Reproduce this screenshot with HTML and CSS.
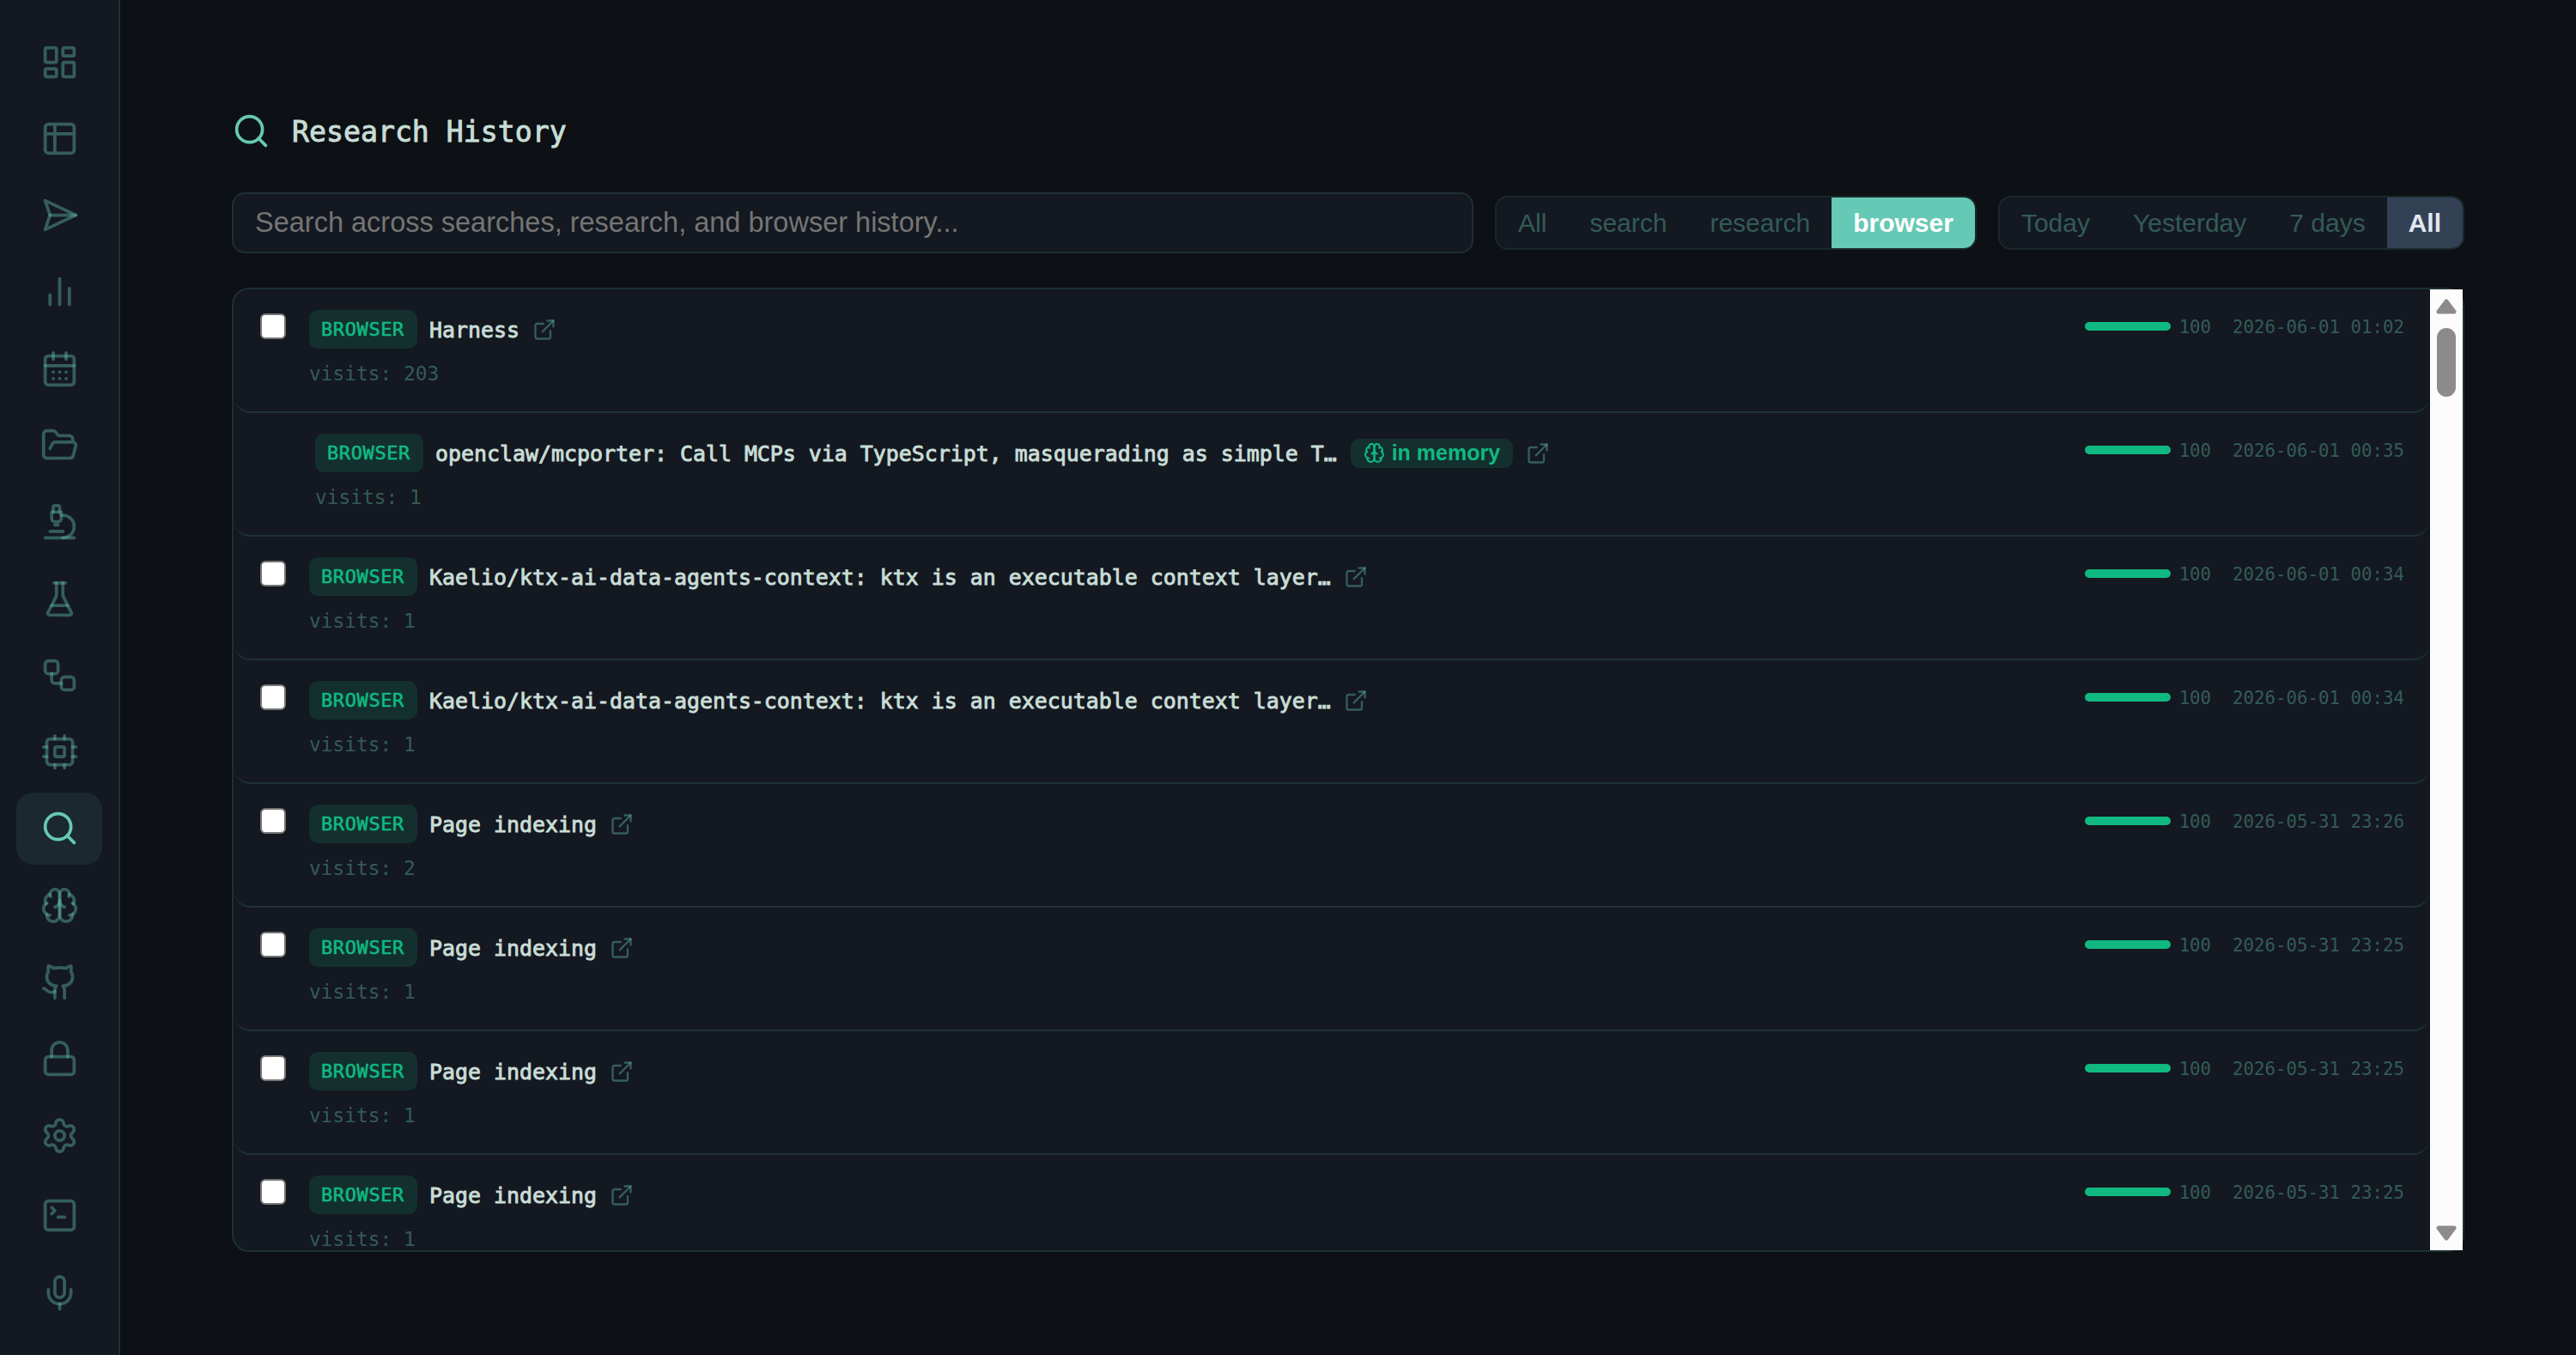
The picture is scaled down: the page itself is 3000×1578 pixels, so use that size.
FILE: index.html
```
<!DOCTYPE html>
<html lang="en">
<head>
  <meta charset="UTF-8" />
  <meta name="viewport" content="width=device-width, initial-scale=1.0" />
  <title>Research History</title>
  <link rel="stylesheet" href="styles.css">
</head>
<body>
  <svg class="sprite" xmlns="http://www.w3.org/2000/svg">
    <symbol id="i-search" viewBox="0 0 24 24"><path d="m21 21-4.34-4.34"/><circle cx="11" cy="11" r="8"/></symbol>
    <symbol id="i-link" viewBox="0 0 24 24"><path d="M15 3h6v6"/><path d="M10 14 21 3"/><path d="M18 13v6a2 2 0 0 1-2 2H5a2 2 0 0 1-2-2V8a2 2 0 0 1 2-2h6"/></symbol>
    <symbol id="i-brain" viewBox="0 0 24 24">
      <path d="M12 5a3 3 0 1 0-5.997.125 4 4 0 0 0-2.526 5.77 4 4 0 0 0 .556 6.588A4 4 0 1 0 12 18Z"/>
      <path d="M12 5a3 3 0 1 1 5.997.125 4 4 0 0 1 2.526 5.77 4 4 0 0 1-.556 6.588A4 4 0 1 1 12 18Z"/>
      <path d="M15 13a4.5 4.5 0 0 1-3-4 4.5 4.5 0 0 1-3 4"/>
      <path d="M17.599 6.5a3 3 0 0 0 .399-1.375"/>
      <path d="M6.003 5.125A3 3 0 0 0 6.401 6.5"/>
      <path d="M3.477 10.896a4 4 0 0 1 .585-.396"/>
      <path d="M19.938 10.5a4 4 0 0 1 .585.396"/>
      <path d="M6 18a4 4 0 0 1-1.967-.516"/>
      <path d="M19.967 17.484A4 4 0 0 1 18 18"/>
    </symbol>
  </svg>

  <div class="app">
    <aside class="sidebar">
      <nav class="nav">
        <a class="nav-item"><svg class="icon" viewBox="0 0 24 24"><rect x="3" y="3" width="7" height="9" rx="1"/><rect x="14" y="3" width="7" height="5" rx="1"/><rect x="14" y="12" width="7" height="9" rx="1"/><rect x="3" y="16" width="7" height="5" rx="1"/></svg></a>
        <a class="nav-item"><svg class="icon" viewBox="0 0 24 24"><path d="M5 3h14a2 2 0 0 1 2 2v14a2 2 0 0 1-2 2H5a2 2 0 0 1-2-2V5a2 2 0 0 1 2-2zM3 9h18M9 3v18"/></svg></a>
        <a class="nav-item"><svg class="icon" viewBox="0 0 24 24"><path d="m3 3 3 9-3 9 19-9Z"/><path d="M6 12h16"/></svg></a>
        <a class="nav-item"><svg class="icon" viewBox="0 0 24 24"><path d="M18 20V10"/><path d="M12 20V4"/><path d="M6 20v-6"/></svg></a>
        <a class="nav-item"><svg class="icon" viewBox="0 0 24 24"><path d="M8 2v4"/><path d="M16 2v4"/><rect x="3" y="4" width="18" height="18" rx="2"/><path d="M3 10h18"/><path d="M8 14h.01"/><path d="M12 14h.01"/><path d="M16 14h.01"/><path d="M8 18h.01"/><path d="M12 18h.01"/><path d="M16 18h.01"/></svg></a>
        <a class="nav-item"><svg class="icon" viewBox="0 0 24 24"><path d="m6 14 1.5-2.9A2 2 0 0 1 9.24 10H20a2 2 0 0 1 1.94 2.5l-1.54 6a2 2 0 0 1-1.95 1.5H4a2 2 0 0 1-2-2V5a2 2 0 0 1 2-2h3.9a2 2 0 0 1 1.69.9l.81 1.2a2 2 0 0 0 1.67.9H18a2 2 0 0 1 2 2v2"/></svg></a>
        <a class="nav-item"><svg class="icon" viewBox="0 0 24 24"><path d="M6 18h8"/><path d="M3 22h18"/><path d="M14 22a7 7 0 1 0 0-14h-1"/><path d="M9 14h2"/><path d="M9 12a2 2 0 0 1-2-2V6h6v4a2 2 0 0 1-2 2Z"/><path d="M12 6V3a1 1 0 0 0-1-1H9a1 1 0 0 0-1 1v3"/></svg></a>
        <a class="nav-item"><svg class="icon" viewBox="0 0 24 24"><path d="M10 2v7.527a2 2 0 0 1-.211.896L4.72 20.55a1 1 0 0 0 .9 1.45h12.76a1 1 0 0 0 .9-1.45l-5.069-10.127A2 2 0 0 1 14 9.527V2"/><path d="M8.5 2h7"/><path d="M7 16h10"/></svg></a>
        <a class="nav-item"><svg class="icon" viewBox="0 0 24 24"><rect x="3" y="3" width="8" height="8" rx="2"/><path d="M7 11v4a2 2 0 0 0 2 2h4"/><rect x="13" y="13" width="8" height="8" rx="2"/></svg></a>
        <a class="nav-item"><svg class="icon" viewBox="0 0 24 24"><rect x="4" y="4" width="16" height="16" rx="2"/><rect x="9" y="9" width="6" height="6" rx="1"/><path d="M15 2v2"/><path d="M15 20v2"/><path d="M2 15h2"/><path d="M2 9h2"/><path d="M20 15h2"/><path d="M20 9h2"/><path d="M9 2v2"/><path d="M9 20v2"/></svg></a>
        <a class="nav-item active"><svg class="icon"><use href="#i-search"/></svg></a>
        <a class="nav-item"><svg class="icon"><use href="#i-brain"/></svg></a>
        <a class="nav-item"><svg class="icon" viewBox="0 0 24 24"><path d="M15 22v-4a4.8 4.8 0 0 0-1-3.5c3 0 6-2 6-5.5.08-1.25-.27-2.48-1-3.5.28-1.15.28-2.35 0-3.5 0 0-1 0-3 1.5-2.64-.5-5.36-.5-8 0C6 2 5 2 5 2c-.3 1.15-.3 2.35 0 3.5A5.403 5.403 0 0 0 4 9c0 3.5 3 5.5 6 5.5-.39.49-.68 1.05-.85 1.65-.17.6-.22 1.23-.15 1.85v4"/><path d="M9 18c-4.51 2-5-2-7-2"/></svg></a>
        <a class="nav-item"><svg class="icon" viewBox="0 0 24 24"><rect x="3" y="11" width="18" height="11" rx="2"/><path d="M7 11V7a5 5 0 0 1 10 0v4"/></svg></a>
        <a class="nav-item"><svg class="icon" viewBox="0 0 24 24"><path d="M9.671 4.136a2.34 2.34 0 0 1 4.659 0 2.34 2.34 0 0 0 3.319 1.915 2.34 2.34 0 0 1 2.33 4.033 2.34 2.34 0 0 0 0 3.831 2.34 2.34 0 0 1-2.33 4.033 2.34 2.34 0 0 0-3.319 1.915 2.34 2.34 0 0 1-4.659 0 2.34 2.34 0 0 0-3.32-1.915 2.34 2.34 0 0 1-2.33-4.033 2.34 2.34 0 0 0 0-3.831A2.34 2.34 0 0 1 6.35 6.051a2.34 2.34 0 0 0 3.319-1.915"/><circle cx="12" cy="12" r="3"/></svg></a>
      </nav>
      <div class="nav nav-bottom">
        <a class="nav-item"><svg class="icon" viewBox="0 0 24 24"><path d="m7 11 2-2-2-2"/><path d="M11 13h4"/><rect x="3" y="3" width="18" height="18" rx="2"/></svg></a>
        <a class="nav-item"><svg class="icon" viewBox="0 0 24 24"><path d="M12 19v3"/><path d="M19 10v2a7 7 0 0 1-14 0v-2"/><rect x="9" y="2" width="6" height="13" rx="3"/></svg></a>
      </div>
    </aside>

    <main class="main">
      <div class="page">
        <div class="page-header">
          <svg class="icon"><use href="#i-search"/></svg>
          <h1>Research History</h1>
        </div>

        <div class="controls">
          <input type="text" class="search-input" placeholder="Search across searches, research, and browser history...">
          <div class="filter-group">
            <button class="filter-btn">All</button>
            <button class="filter-btn">search</button>
            <button class="filter-btn">research</button>
            <button class="filter-btn active">browser</button>
          </div>
          <div class="filter-group">
            <button class="filter-btn">Today</button>
            <button class="filter-btn">Yesterday</button>
            <button class="filter-btn">7 days</button>
            <button class="filter-btn selected">All</button>
          </div>
        </div>

        <div class="list">
          <div class="rows">
            <div class="row">
              <input type="checkbox" class="check">
              <div class="row-body">
                <div class="row-title"><span class="badge">BROWSER</span><span class="name">Harness</span><svg class="link"><use href="#i-link"/></svg></div>
                <div class="visits">visits: 203</div>
              </div>
              <div class="row-meta"><span class="bar"></span><span class="score">100</span><span class="date">2026-06-01 01:02</span></div>
            </div>
            <div class="row in-memory">
              <div class="row-body">
                <div class="row-title"><span class="badge">BROWSER</span><span class="name">openclaw/mcporter: Call MCPs via TypeScript, masquerading as simple T…</span><span class="memory"><svg class="brain"><use href="#i-brain"/></svg>in memory</span><svg class="link"><use href="#i-link"/></svg></div>
                <div class="visits">visits: 1</div>
              </div>
              <div class="row-meta"><span class="bar"></span><span class="score">100</span><span class="date">2026-06-01 00:35</span></div>
            </div>
            <div class="row">
              <input type="checkbox" class="check">
              <div class="row-body">
                <div class="row-title"><span class="badge">BROWSER</span><span class="name">Kaelio/ktx-ai-data-agents-context: ktx is an executable context layer…</span><svg class="link"><use href="#i-link"/></svg></div>
                <div class="visits">visits: 1</div>
              </div>
              <div class="row-meta"><span class="bar"></span><span class="score">100</span><span class="date">2026-06-01 00:34</span></div>
            </div>
            <div class="row">
              <input type="checkbox" class="check">
              <div class="row-body">
                <div class="row-title"><span class="badge">BROWSER</span><span class="name">Kaelio/ktx-ai-data-agents-context: ktx is an executable context layer…</span><svg class="link"><use href="#i-link"/></svg></div>
                <div class="visits">visits: 1</div>
              </div>
              <div class="row-meta"><span class="bar"></span><span class="score">100</span><span class="date">2026-06-01 00:34</span></div>
            </div>
            <div class="row">
              <input type="checkbox" class="check">
              <div class="row-body">
                <div class="row-title"><span class="badge">BROWSER</span><span class="name">Page indexing</span><svg class="link"><use href="#i-link"/></svg></div>
                <div class="visits">visits: 2</div>
              </div>
              <div class="row-meta"><span class="bar"></span><span class="score">100</span><span class="date">2026-05-31 23:26</span></div>
            </div>
            <div class="row">
              <input type="checkbox" class="check">
              <div class="row-body">
                <div class="row-title"><span class="badge">BROWSER</span><span class="name">Page indexing</span><svg class="link"><use href="#i-link"/></svg></div>
                <div class="visits">visits: 1</div>
              </div>
              <div class="row-meta"><span class="bar"></span><span class="score">100</span><span class="date">2026-05-31 23:25</span></div>
            </div>
            <div class="row">
              <input type="checkbox" class="check">
              <div class="row-body">
                <div class="row-title"><span class="badge">BROWSER</span><span class="name">Page indexing</span><svg class="link"><use href="#i-link"/></svg></div>
                <div class="visits">visits: 1</div>
              </div>
              <div class="row-meta"><span class="bar"></span><span class="score">100</span><span class="date">2026-05-31 23:25</span></div>
            </div>
            <div class="row">
              <input type="checkbox" class="check">
              <div class="row-body">
                <div class="row-title"><span class="badge">BROWSER</span><span class="name">Page indexing</span><svg class="link"><use href="#i-link"/></svg></div>
                <div class="visits">visits: 1</div>
              </div>
              <div class="row-meta"><span class="bar"></span><span class="score">100</span><span class="date">2026-05-31 23:25</span></div>
            </div>
          </div>
          <div class="scrollbar">
            <svg class="arrow" viewBox="0 0 24 18"><path d="M12 3 21 15H3Z"/></svg>
            <div class="thumb"></div>
            <svg class="arrow arrow-down" viewBox="0 0 24 18"><path d="M12 15 21 3H3Z"/></svg>
          </div>
        </div>
      </div>
    </main>
  </div>
</body>
</html>
```
FILE: styles.css
```
:root {
  --bg: #0d1014;
  --panel: #141820;
  --accent: #66c9b5;
  --muted: rgba(102, 201, 181, 0.4);
  --border: rgba(102, 201, 181, 0.15);
  --text: #c8ddd6;
  --green: #10b981;
  --mono: 'DejaVu Sans Mono', monospace;
  --sans: 'Liberation Sans', Arial, sans-serif;
}

* {
  margin: 0;
  padding: 0;
  box-sizing: border-box;
}

body {
  background: var(--bg);
  color: var(--text);
  font-family: var(--mono);
  overflow: hidden;
}

.sprite {
  display: none;
}

svg {
  fill: none;
  stroke: currentColor;
  stroke-width: 2;
  stroke-linecap: round;
  stroke-linejoin: round;
  flex-shrink: 0;
}

.icon {
  width: 45px;
  height: 45px;
}

.app {
  display: flex;
  height: 100vh;
}

/* sidebar */
.sidebar {
  width: 140px;
  display: flex;
  flex-direction: column;
  justify-content: space-between;
  padding: 30px 0 31px;
  background: var(--panel);
  border-right: 2px solid #1e3034;
}

.nav {
  display: flex;
  flex-direction: column;
  align-items: center;
  gap: 5.3px;
}

.nav-item {
  width: 100px;
  height: 84px;
  display: flex;
  align-items: center;
  justify-content: center;
  border-radius: 20px;
  color: var(--muted);
}

.nav-item.active {
  background: rgba(102, 201, 181, 0.1);
  color: var(--accent);
}

/* page */
.main {
  flex: 1;
  display: flex;
  justify-content: center;
  padding-top: 125px;
}

.page {
  width: 2600px;
}

.page-header {
  display: flex;
  align-items: center;
  gap: 25px;
  height: 55px;
  margin-bottom: 44px;
}

.page-header .icon {
  color: var(--accent);
}

.page-header h1 {
  padding-top: 2px;
  font-size: 33.2px;
  font-weight: 400;
  -webkit-text-stroke: 0.9px currentColor;
}

.controls {
  display: flex;
  align-items: center;
  gap: 25px;
  margin-bottom: 40px;
}

.search-input {
  flex: 1;
  height: 71px;
  padding: 0 25px;
  background: var(--panel);
  border: 2px solid #1e3034;
  border-radius: 15px;
  color: var(--text);
  font-family: var(--sans);
  font-size: 32.5px;
}

.search-input::placeholder {
  color: #757575;
}

.filter-group {
  display: flex;
  height: 63px;
  background: var(--panel);
  border: 2px solid #1a282b;
  border-radius: 15px;
  overflow: hidden;
}

.filter-btn {
  padding: 0 25px;
  border: none;
  background: none;
  color: var(--muted);
  font-family: var(--sans);
  font-size: 30px;
}

.filter-btn.active {
  background: var(--accent);
  color: #fff;
  font-weight: 700;
}

.filter-btn.selected {
  background: #334155;
  color: #e2e8f0;
  font-weight: 700;
}

/* history list */
.list {
  display: flex;
  height: 1123px;
  background: var(--panel);
  border: 2px solid #1e3034;
  border-radius: 20px;
}

.rows {
  flex: 1;
  overflow: hidden;
}

.row {
  display: flex;
  align-items: flex-start;
  height: 144px;
  padding: 24px 30px 0 31px;
  border-bottom: 2px solid var(--border);
  border-radius: 20px;
}

.row.in-memory {
  padding-left: 95px;
}

.check {
  appearance: none;
  width: 30px;
  height: 30px;
  margin: 4px 27px 0 0;
  background: #fff;
  border: 2px solid #767676;
  border-radius: 6px;
}

.row-body {
  flex: 1;
}

.row-title {
  display: flex;
  align-items: center;
  gap: 15px;
  height: 45px;
}

.badge {
  width: 126px;
  height: 45px;
  padding-left: 14px;
  border-radius: 10px;
  background: rgba(16, 185, 129, 0.15);
  color: var(--green);
  font-size: 22px;
  line-height: 46px;
  letter-spacing: 0.6px;
  -webkit-text-stroke: 0.6px currentColor;
}

.name {
  margin-left: -1px;
  padding-top: 2px;
  font-size: 24.92px;
  line-height: 45px;
  white-space: nowrap;
  -webkit-text-stroke: 0.9px currentColor;
}

.memory {
  display: flex;
  align-items: center;
  gap: 8px;
  height: 34px;
  margin-left: 1px;
  padding: 0 15px;
  border-radius: 10px;
  background: rgba(16, 185, 129, 0.15);
  color: var(--green);
  font-family: var(--sans);
  font-size: 25px;
  font-weight: 700;
}

.brain {
  width: 25px;
  height: 25px;
}

.link {
  width: 28px;
  height: 28px;
  color: var(--muted);
}

.visits {
  margin-top: 14px;
  color: var(--muted);
  font-size: 22.84px;
  line-height: 30px;
}

.row-meta {
  display: flex;
  align-items: center;
  height: 38px;
  color: var(--muted);
  font-size: 20.76px;
}

.bar {
  width: 100px;
  height: 10px;
  margin-right: 10px;
  border-radius: 5px;
  background: var(--green);
}

.score,
.date {
  padding-top: 1px;
}

.score {
  margin-right: 25px;
}

.scrollbar {
  width: 38px;
  display: flex;
  flex-direction: column;
  align-items: center;
  padding: 11px 0;
  background: #fcfcfc;
}

.arrow {
  width: 24px;
  height: 18px;
  fill: #8b8b8b;
  stroke: #8b8b8b;
  stroke-width: 5;
}

.arrow-down {
  margin-top: auto;
}

.thumb {
  width: 22px;
  height: 80px;
  margin-top: 16px;
  border-radius: 11px;
  background: #8b8b8b;
}
```
